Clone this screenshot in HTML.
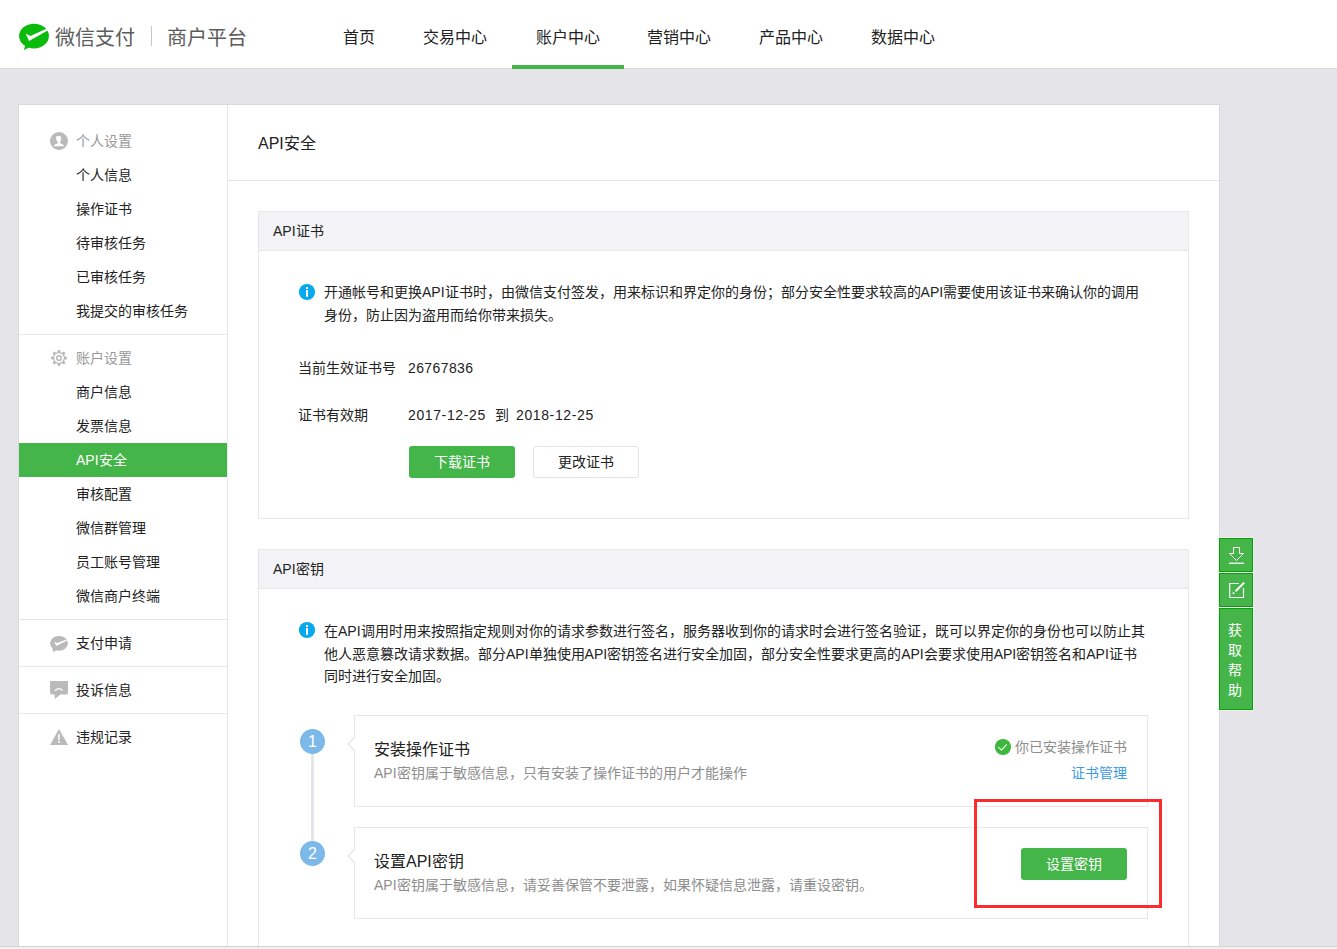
<!DOCTYPE html>
<html lang="zh-CN"><head><meta charset="utf-8">
<style>
*{box-sizing:border-box;margin:0;padding:0}
html,body{width:1337px;height:949px;overflow:hidden}
body{position:relative;background:#e4e4e9;font-family:"Liberation Sans",sans-serif;font-size:14px;color:#353535}
.hd{position:absolute;left:0;top:0;width:1337px;height:69px;background:#fff;border-bottom:1px solid #d9d9de}
.logo{position:absolute;left:14px;top:18px;width:40px;height:40px}
.brand{position:absolute;top:24px;font-size:20px;line-height:28px;color:#5c5c5c;white-space:nowrap}
.brand-sep{position:absolute;left:151px;top:26px;width:1px;height:20px;background:#c9c9c9}
.nav{position:absolute;top:0;height:69px}
.nav a{position:absolute;top:0;height:69px;line-height:76px;font-size:16px;color:#222;text-decoration:none;white-space:nowrap;text-align:center}
.nav a.on:after{content:"";position:absolute;left:0;right:0;top:65px;height:4px;background:#44b549}
.panel{position:absolute;left:18px;top:104px;width:1202px;height:900px;background:#fff;border:1px solid #d9d9de}
.side{position:absolute;left:0;top:0;width:209px;height:100%;border-right:1px solid #e7e7eb}
.grp{border-bottom:1px solid #e7e7eb;padding:6px 0}
.grp.g1{padding-top:19px}
.grp.last{border-bottom:0}
.it{height:34px;line-height:34px;padding-left:57px;color:#222;position:relative;white-space:nowrap}
.it.h{color:#999}
.it.on{background:#44b549;color:#fff}
.ico{position:absolute;left:31px;top:8px;width:18px;height:18px}
.main{position:absolute;left:209px;top:0;width:991px;height:100%}
.mhd{height:76px;border-bottom:1px solid #e7e7eb;padding-left:30px;font-size:16px;line-height:78px;color:#222}
.box{position:absolute;left:30px;width:931px;border:1px solid #e7e7eb}
.bhd{height:39px;line-height:38px;background:#f3f3f7;border-bottom:1px solid #e7e7eb;padding-left:14px;color:#222}
.tip{position:absolute;left:65px;width:850px;line-height:22.5px;color:#222}
.tip i{position:absolute;left:-26px;top:3px;width:16px;height:16px}
.btn{position:absolute;width:106px;height:32px;line-height:32px;text-align:center;border-radius:3px;font-size:14px}
.btn.g{background:#44b549;color:#fff}
.btn.w{background:#fff;border:1px solid #e2e2e8;color:#222;line-height:30px}

.row{position:absolute;line-height:22px;color:#222;white-space:nowrap}
.info{display:block;border-radius:50%;background:#1aa7ea}
.info:before{content:"";position:absolute;left:7px;top:3px;width:2px;height:2px;background:#fff}
.info:after{content:"";position:absolute;left:7px;top:6px;width:2px;height:7px;background:#fff}
.tip{white-space:nowrap}
.vline{position:absolute;left:52px;top:204px;width:3px;height:90px;background:#e4e4e9}
.step{position:absolute;left:41px;width:25px;height:25px;border-radius:50%;background:#7cb9e8;color:#fff;text-align:center;line-height:25px;font-size:16px}
.card{position:absolute;left:95px;width:794px;height:92px;border:1px solid #e7e7eb;background:#fff}
.card:before{content:"";position:absolute;left:-8px;top:21px;width:0;height:0;border:7px solid transparent;border-right-color:#e7e7eb;border-left:0}
.card:after{content:"";position:absolute;left:-6px;top:22px;width:0;height:0;border:6px solid transparent;border-right-color:#fff;border-left:0}
.ct{position:absolute;left:19px;top:22px;font-size:16px;line-height:24px;color:#222;white-space:nowrap}
.cs{position:absolute;left:19px;top:46px;line-height:22px;color:#8d8d8d;white-space:nowrap}
.ok{position:absolute;right:20px;top:20px;line-height:22px;color:#8d8d8d;white-space:nowrap}
.lnk{position:absolute;right:20px;top:46px;line-height:22px;color:#3d9ae5;white-space:nowrap}
.redbox{position:absolute;left:974px;top:799px;width:188px;height:109px;border:3px solid #fd2c2c}
.bline{position:absolute;left:0;top:946px;width:1337px;height:3px;background:#f1f1f1;border-top:1px solid #d4d4d4}
.float{position:absolute;left:1219px;width:34px;background:#45b549;border:1px solid #05a205;color:#fff}
</style></head><body>
<div class="hd">
  <svg class="logo" viewBox="14 18 40 40"><ellipse cx="34" cy="36.1" rx="14.9" ry="12.4" fill="#0bbb0b"/><path d="M25.2 44.5 L24 50.2 L30 46.8Z" fill="#0bbb0b"/><path d="M25.6 33.4 L30.4 36 L47 28.6 L48 30.2 L29.1 40.9 Z" fill="#fff"/></svg>
  <div class="brand" style="left:55px">微信支付</div>
  <div class="brand-sep"></div>
  <div class="brand" style="left:167px">商户平台</div>
  <div class="nav">
    <a style="left:319px;width:80px">首页</a>
    <a style="left:399px;width:112px">交易中心</a>
    <a class="on" style="left:512px;width:112px">账户中心</a>
    <a style="left:623px;width:112px">营销中心</a>
    <a style="left:735px;width:112px">产品中心</a>
    <a style="left:847px;width:112px">数据中心</a>
  </div>
</div>

<div class="panel">
  <div class="side">
    <div class="grp g1">
      <div class="it h">个人设置</div>
      <div class="it">个人信息</div>
      <div class="it">操作证书</div>
      <div class="it">待审核任务</div>
      <div class="it">已审核任务</div>
      <div class="it">我提交的审核任务</div>
    </div>
    <div class="grp">
      <div class="it h">账户设置</div>
      <div class="it">商户信息</div>
      <div class="it">发票信息</div>
      <div class="it on">API安全</div>
      <div class="it">审核配置</div>
      <div class="it">微信群管理</div>
      <div class="it">员工账号管理</div>
      <div class="it">微信商户终端</div>
    </div>
    <div class="grp">
      <div class="it">支付申请</div>
    </div>
    <div class="grp">
      <div class="it">投诉信息</div>
    </div>
    <div class="grp last">
      <div class="it">违规记录</div>
    </div>
  </div>
  <div class="main">
    <div class="mhd">API安全</div>
    <!-- box 1 -->
    <div class="box" style="top:106px;height:308px">
      <div class="bhd">API证书</div>
      <div class="tip" style="top:69px">开通帐号和更换API证书时，由微信支付签发，用来标识和界定你的身份；部分安全性要求较高的API需要使用该证书来确认你的调用<br>身份，防止因为盗用而给你带来损失。</div>
      <div class="row" style="left:39px;top:145px">当前生效证书号</div>
      <div class="row" style="left:149px;top:145px;letter-spacing:0.4px">26767836</div>
      <div class="row" style="left:39px;top:192px">证书有效期</div>
      <div class="row" style="left:149px;top:192px;letter-spacing:0.62px">2017-12-25</div>
      <div class="row" style="left:236px;top:192px">到</div>
      <div class="row" style="left:257px;top:192px;letter-spacing:0.62px">2018-12-25</div>
      <div class="btn g" style="left:150px;top:234px">下载证书</div>
      <div class="btn w" style="left:274px;top:234px">更改证书</div>
    </div>
    <div class="box" style="top:444px;height:500px">
      <div class="bhd">API密钥</div>
      <div class="tip" style="top:70px">在API调用时用来按照指定规则对你的请求参数进行签名，服务器收到你的请求时会进行签名验证，既可以界定你的身份也可以防止其<br>他人恶意篡改请求数据。部分API单独使用API密钥签名进行安全加固，部分安全性要求更高的API会要求使用API密钥签名和API证书<br>同时进行安全加固。</div>
      <div class="vline"></div>
      <div class="step" style="top:179px">1</div>
      <div class="step" style="top:291px">2</div>
      <div class="card" style="top:165px">
        <div class="ct">安装操作证书</div>
        <div class="cs">API密钥属于敏感信息，只有安装了操作证书的用户才能操作</div>
        <div class="ok">你已安装操作证书</div>
        <div class="lnk">证书管理</div>
      </div>
      <div class="card" style="top:277px">
        <div class="ct">设置API密钥</div>
        <div class="cs">API密钥属于敏感信息，请妥善保管不要泄露，如果怀疑信息泄露，请重设密钥。</div>
        <div class="btn g" style="left:666px;top:20px">设置密钥</div>
      </div>
    </div>
  </div>
</div>
<div class="bline"></div>
<svg style="position:absolute;left:0;top:0" width="1337" height="949" viewBox="0 0 1337 949">
<g fill="#bababa">
<circle cx="59" cy="141" r="9"/>
<path d="M57.37 352.33 L57.94 349.97 L60.06 349.97 L60.63 352.33 L61.86 352.84 L63.93 351.57 L65.43 353.07 L64.16 355.14 L64.67 356.37 L67.03 356.94 L67.03 359.06 L64.67 359.63 L64.16 360.86 L65.43 362.93 L63.93 364.43 L61.86 363.16 L60.63 363.67 L60.06 366.03 L57.94 366.03 L57.37 363.67 L56.14 363.16 L54.07 364.43 L52.57 362.93 L53.84 360.86 L53.33 359.63 L50.97 359.06 L50.97 356.94 L53.33 356.37 L53.84 355.14 L52.57 353.07 L54.07 351.57 L56.14 352.84Z"/>

<ellipse cx="59" cy="643.3" rx="8.9" ry="7.4"/>
<path d="M52.3 648 L53.4 652.2 L57 649.8Z"/>
<path d="M50 681 H68 V692.5 Q68 694.6 66 694.6 H60.2 L55 699 L54.4 694.6 H52 Q50 694.6 50 692.5Z"/>
<path d="M59 729 L68 745 L50 745Z"/>
</g>
<g fill="#fff">
<path d="M56 137.5 Q56 135.8 58.6 135.8 Q61.3 135.8 61.3 137.8 Q61.3 140.8 60.1 142.5 L60.3 143.2 Q63.2 143.9 64.2 146.2 H53.8 Q54.8 143.9 57.7 143.2 L57.9 142.5 Q56 140.8 56 137.5Z"/>
<circle cx="59" cy="358" r="4.8"/>
<path d="M54 642.2 L57.1 642.9 L66.3 639.6 L66.6 640.7 L56.4 646.1Z"/>
<path d="M55 690.8 Q59 686.8 62.6 690.4" stroke="#fff" stroke-width="1.3" fill="none"/>
</g>
<circle cx="59" cy="358" r="3.1" fill="#bababa"/>
<circle cx="59" cy="358" r="1.5" fill="#fff"/>
<rect x="58" y="734" width="2" height="6.2" fill="#f0f0f0"/>
<rect x="58" y="741" width="2" height="2" fill="#f0f0f0"/>
<g>
<circle cx="307" cy="292" r="8.1" fill="#06a9ee"/><rect x="306" y="287" width="2" height="2" fill="#fff"/><rect x="306" y="290" width="2" height="6.8" fill="#fff"/>
<circle cx="307" cy="630" r="8.1" fill="#06a9ee"/><rect x="306" y="625" width="2" height="2" fill="#fff"/><rect x="306" y="628" width="2" height="6.8" fill="#fff"/>
</g>
<circle cx="1003" cy="747" r="8.1" fill="#3db83d"/>
<path d="M998.2 747.2 L1001.5 750 L1006.8 744.3" stroke="#fff" stroke-width="1.1" fill="none"/>
</svg>

<div class="redbox"></div>
<div style="position:absolute;left:1218px;top:537px;width:36px;height:174px;background:#f4f2f7"></div>
<div class="float" style="top:538px;height:34px"><svg width="32" height="32" viewBox="1220 539 32 32" style="position:absolute;left:0;top:0"><path d="M1233.5 547.5 H1239.5 V553.5 H1243.5 L1236.5 560.5 L1229.5 553.5 H1233.5 Z" stroke="#fff" stroke-width="1" fill="none"/><rect x="1229" y="562.6" width="15" height="1.3" fill="#fff"/></svg></div>
<div class="float" style="top:573px;height:34px"><svg width="32" height="32" viewBox="1220 574 32 32" style="position:absolute;left:0;top:0"><path d="M1239 583.5 H1229.7 V597.5 H1243.5 V588" stroke="#fff" stroke-width="1.2" fill="none"/><path d="M1244.2 582.6 L1235.5 591.3" stroke="#fff" stroke-width="2" fill="none"/><path d="M1233 591.6 L1235 593.6 L1232.7 594.3 Q1232.4 592.8 1233 591.6Z" fill="#fff"/></svg></div>
<div class="float" style="top:608px;height:102px;padding-top:11px;padding-right:2px;text-align:center;line-height:20px">获<br>取<br>帮<br>助</div>
</body></html>
